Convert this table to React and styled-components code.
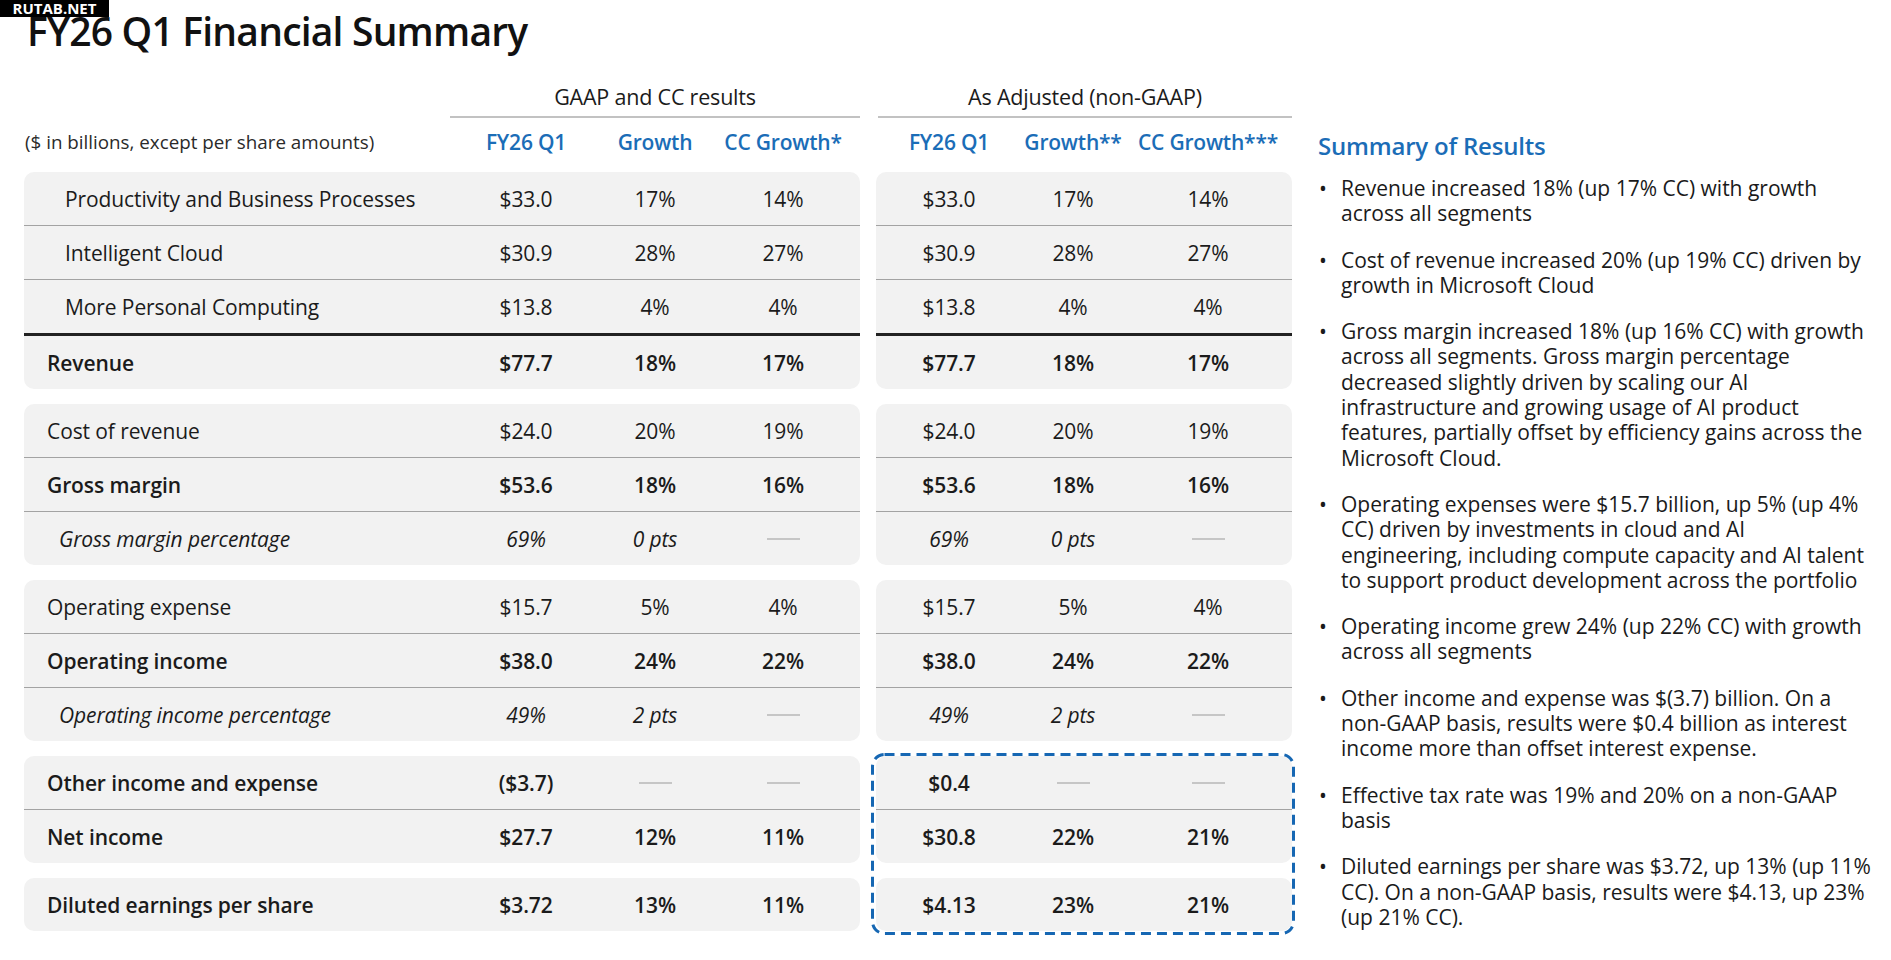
import React from 'react';
import styled, { createGlobalStyle } from 'styled-components';

const BLUE = '#1b6db7';

const GlobalStyle = createGlobalStyle`
  body {
    margin: 0;
    background: #ffffff;
    font-family: "Open Sans", "Noto Sans", sans-serif;
    color: #1b1b1b;
  }
`;

const groups = [
  [
    { label: 'Productivity and Business Processes', kind: 'sub', gaap: ['$33.0', '17%', '14%'], adj: ['$33.0', '17%', '14%'] },
    { label: 'Intelligent Cloud', kind: 'sub', gaap: ['$30.9', '28%', '27%'], adj: ['$30.9', '28%', '27%'] },
    { label: 'More Personal Computing', kind: 'sub', gaap: ['$13.8', '4%', '4%'], adj: ['$13.8', '4%', '4%'] },
    { label: 'Revenue', kind: 'bold', sep: 'thick', gaap: ['$77.7', '18%', '17%'], adj: ['$77.7', '18%', '17%'] },
  ],
  [
    { label: 'Cost of revenue', kind: 'plain', gaap: ['$24.0', '20%', '19%'], adj: ['$24.0', '20%', '19%'] },
    { label: 'Gross margin', kind: 'bold', gaap: ['$53.6', '18%', '16%'], adj: ['$53.6', '18%', '16%'] },
    { label: 'Gross margin percentage', kind: 'italic', gaap: ['69%', '0 pts', null], adj: ['69%', '0 pts', null] },
  ],
  [
    { label: 'Operating expense', kind: 'plain', gaap: ['$15.7', '5%', '4%'], adj: ['$15.7', '5%', '4%'] },
    { label: 'Operating income', kind: 'bold', gaap: ['$38.0', '24%', '22%'], adj: ['$38.0', '24%', '22%'] },
    { label: 'Operating income percentage', kind: 'italic', gaap: ['49%', '2 pts', null], adj: ['49%', '2 pts', null] },
  ],
  [
    { label: 'Other income and expense', kind: 'bold', gaap: ['($3.7)', null, null], adj: ['$0.4', null, null] },
    { label: 'Net income', kind: 'bold', gaap: ['$27.7', '12%', '11%'], adj: ['$30.8', '22%', '21%'] },
  ],
  [
    { label: 'Diluted earnings per share', kind: 'bold', gaap: ['$3.72', '13%', '11%'], adj: ['$4.13', '23%', '21%'] },
  ],
];

const bullets = [
  ['Revenue increased 18% (up 17% CC) with growth', 'across all segments'],
  ['Cost of revenue increased 20% (up 19% CC) driven by', 'growth in Microsoft Cloud'],
  [
    'Gross margin increased 18% (up 16% CC) with growth',
    'across all segments. Gross margin percentage',
    'decreased slightly driven by scaling our AI',
    'infrastructure and growing usage of AI product',
    'features, partially offset by efficiency gains across the',
    'Microsoft Cloud.',
  ],
  [
    'Operating expenses were $15.7 billion, up 5% (up 4%',
    'CC) driven by investments in cloud and AI',
    'engineering, including compute capacity and AI talent',
    'to support product development across the portfolio',
  ],
  ['Operating income grew 24% (up 22% CC) with growth', 'across all segments'],
  [
    'Other income and expense was $(3.7) billion. On a',
    'non-GAAP basis, results were $0.4 billion as interest',
    'income more than offset interest expense.',
  ],
  ['Effective tax rate was 19% and 20% on a non-GAAP', 'basis'],
  [
    'Diluted earnings per share was $3.72, up 13% (up 11%',
    'CC). On a non-GAAP basis, results were $4.13, up 23%',
    '(up 21% CC).',
  ],
];

const LEFT_COLS = '424px 156px 102px 154px';
const RIGHT_COLS = '146px 102px 168px';

export default function App() {
  return (
    <>
      <GlobalStyle />
      <Watermark>RUTAB.NET</Watermark>
      <Page>
        <Title>FY26 Q1 Financial Summary</Title>
        <Body>
          <Tables>
            <Panel
              cols={LEFT_COLS}
              title="GAAP and CC results"
              heads={['FY26 Q1', 'Growth', 'CC Growth*']}
              note="($ in billions, except per share amounts)"
              field="gaap"
            />
            <Panel
              cols={RIGHT_COLS}
              title="As Adjusted (non-GAAP)"
              heads={['FY26 Q1', 'Growth**', 'CC Growth***']}
              field="adj"
              dashed
            />
          </Tables>
          <Summary>
            <SummaryTitle>Summary of Results</SummaryTitle>
            <BulletList>
              {bullets.map((lines, i) => (
                <Bullet key={i}>
                  <Dot>•</Dot>
                  <BulletText>
                    {lines.map((line, j) => (
                      <React.Fragment key={j}>
                        {j > 0 && <br />}
                        {line}
                      </React.Fragment>
                    ))}
                  </BulletText>
                </Bullet>
              ))}
            </BulletList>
          </Summary>
        </Body>
      </Page>
    </>
  );
}

function Panel({ cols, title, heads, note, field, dashed }) {
  const withLabel = Boolean(note);
  const renderGroup = (rows, gi) => (
    <Group key={gi}>
      {rows.map((row, ri) => (
        <Row key={ri} $cols={cols} $sep={ri === 0 ? null : row.sep || 'thin'}>
          {withLabel && <Label $kind={row.kind}>{row.label}</Label>}
          {row[field].map((v, ci) => (
            <Cell key={ci} $kind={row.kind}>
              {v === null ? <Dash /> : v}
            </Cell>
          ))}
        </Row>
      ))}
    </Group>
  );

  return (
    <PanelWrap>
      <HeadGrid $cols={cols}>
        <GroupTitle $span={withLabel ? '2 / -1' : '1 / -1'}>{title}</GroupTitle>
      </HeadGrid>
      <ColHeads $cols={cols}>
        {withLabel && <Note>{note}</Note>}
        {heads.map((h) => (
          <ColHead key={h}>{h}</ColHead>
        ))}
      </ColHeads>
      <Stack>
        {groups.slice(0, 3).map(renderGroup)}
        <Cluster>
          {groups.slice(3).map((g, i) => renderGroup(g, i + 3))}
          {dashed && (
            <DashedFrame>
              <rect />
            </DashedFrame>
          )}
        </Cluster>
      </Stack>
    </PanelWrap>
  );
}

const Watermark = styled.div`
  position: absolute;
  top: 0;
  left: 0;
  width: 109px;
  height: 17px;
  background: #000;
  color: #fff;
  font-family: "Open Sans", sans-serif;
  font-weight: 700;
  font-size: 15px;
  line-height: 17px;
  text-align: center;
  z-index: 2;
`;

const Page = styled.div`
  padding-left: 24px;
  min-height: 960px;
  box-sizing: border-box;
`;

const Title = styled.h1`
  margin: 4px 0 0 3px;
  font-size: 39px;
  line-height: 54px;
  font-weight: 600;
  letter-spacing: -0.8px;
  color: #111;
`;

const Body = styled.div`
  display: flex;
  align-items: flex-start;
`;

const Tables = styled.div`
  display: flex;
  gap: 16px;
`;

const PanelWrap = styled.div`
  display: flex;
  flex-direction: column;
`;

const HeadGrid = styled.div`
  display: grid;
  grid-template-columns: ${(p) => p.$cols};
  margin-top: 20px;
`;

const GroupTitle = styled.div`
  grid-column: ${(p) => p.$span};
  height: 38px;
  line-height: 38px;
  text-align: center;
  font-size: 21.5px;
  letter-spacing: -0.2px;
  border-bottom: 2px solid #c2c2c2;
  margin-left: 2px;
`;

const ColHeads = styled.div`
  display: grid;
  grid-template-columns: ${(p) => p.$cols};
  align-items: center;
  height: 48px;
  margin-bottom: 6px;
`;

const Note = styled.div`
  font-size: 18.8px;
  color: #2a2a2a;
  padding-left: 1px;
  white-space: nowrap;
`;

const ColHead = styled.div`
  text-align: center;
  font-size: 21px;
  font-weight: 600;
  letter-spacing: -0.2px;
  color: ${BLUE};
  white-space: nowrap;
`;

const Stack = styled.div`
  display: flex;
  flex-direction: column;
  gap: 15px;
`;

const Cluster = styled.div`
  position: relative;
  display: flex;
  flex-direction: column;
  gap: 15px;
`;

const DashedFrame = styled.svg`
  position: absolute;
  top: -3px;
  left: -5px;
  width: calc(100% + 8px);
  height: calc(100% + 7px);
  pointer-events: none;

  rect {
    x: 1.5px;
    y: 1.5px;
    width: calc(100% - 3px);
    height: calc(100% - 3px);
    rx: 12px;
    ry: 12px;
    fill: none;
    stroke: #1667b3;
    stroke-width: 3px;
    stroke-dasharray: 10 6;
  }
`;

const Group = styled.div`
  background: #f2f2f2;
  border-radius: 10px;
  overflow: hidden;
`;

const Row = styled.div`
  display: grid;
  grid-template-columns: ${(p) => p.$cols};
  align-items: center;
  height: 53px;
  border-top: ${(p) =>
    p.$sep === 'thick' ? '3px solid #222' : p.$sep === 'thin' ? '1px solid #a3a3a3' : 'none'};
`;

const fontFor = (kind) => {
  if (kind === 'bold') return 'font-weight: 600;';
  if (kind === 'italic') return 'font-style: italic;';
  return '';
};

const Label = styled.div`
  font-size: 21px;
  letter-spacing: -0.1px;
  white-space: nowrap;
  padding-left: ${(p) => (p.$kind === 'sub' ? 41 : p.$kind === 'italic' ? 35 : 23)}px;
  ${(p) => fontFor(p.$kind)}
`;

const Cell = styled.div`
  display: flex;
  justify-content: center;
  align-items: center;
  font-size: 21px;
  letter-spacing: -0.1px;
  ${(p) => fontFor(p.$kind)}
`;

const Dash = styled.span`
  display: block;
  width: 33px;
  height: 2px;
  background: #c6c6c6;
`;

const Summary = styled.div`
  margin-left: 26px;
  padding-top: 72px;
`;

const SummaryTitle = styled.h2`
  margin: 0;
  font-size: 24px;
  line-height: 32px;
  font-weight: 600;
  letter-spacing: -0.2px;
  color: ${BLUE};
`;

const BulletList = styled.ul`
  list-style: none;
  margin: 14px 0 0;
  padding: 0;
  display: flex;
  flex-direction: column;
  gap: 21px;
`;

const Bullet = styled.li`
  display: flex;
  font-size: 21px;
  line-height: 25.3px;
  color: #1a1a1a;
`;

const Dot = styled.span`
  width: 22px;
  flex: none;
  padding-left: 1px;
`;

const BulletText = styled.span`
  white-space: nowrap;
`;
